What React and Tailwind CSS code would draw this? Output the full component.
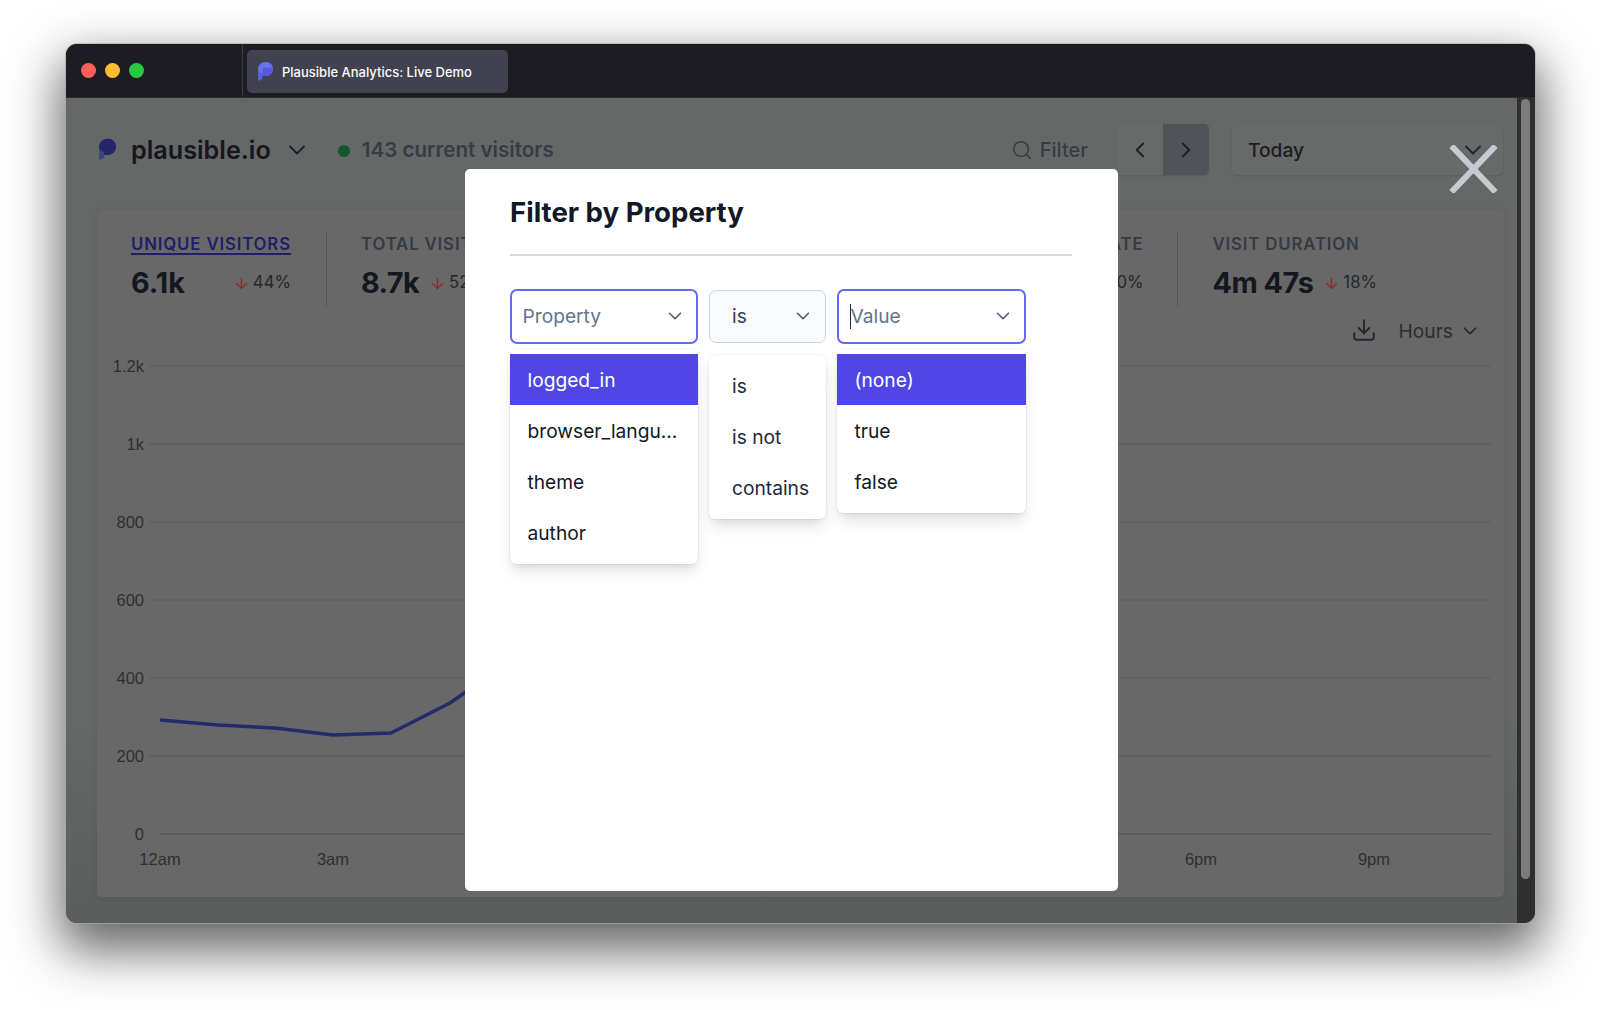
import React from "react";
import { ChevronDown, ChevronLeft, ChevronRight, Search, Download, ArrowDown } from "lucide-react";

function Logo({ className, a, b, c }) {
  return (
    <svg viewBox="0 0 18 23" className={className}>
      <path d="M0 9.5C0 4 4 0 9.5 0C14.5 0 18 3.7 18 8.5C18 13.5 14 17 9.5 17H5.5V20.5L0 23Z" fill={a} />
      <path d="M0 9.5C0 4 4 0 9.5 0C14.5 0 18 3.7 18 8.5C18 13.5 14 17 9.5 17H5.5V14C3 14 0.6 12 0 9.5Z" fill={b} />
      <path d="M7.5 7H18C17.6 12.5 14 17 9.5 17H5.5V9C5.5 8 6.3 7 7.5 7Z" fill={c} />
    </svg>
  );
}

function Stat({ label, value, delta, active, valueClass }) {
  return (
    <div className="flex flex-col pt-px">
      <div
        className={
          active
            ? "h-[22px] text-[16.8px] leading-[22px] font-semibold tracking-[0.85px] text-[#1f1d6e] underline underline-offset-[3px] decoration-2 whitespace-nowrap"
            : "h-[22px] text-[16.8px] leading-[22px] font-semibold tracking-[0.85px] text-[#353a44] whitespace-nowrap"
        }
      >
        {label}
      </div>
      <div className={"mt-[10px] flex items-center " + valueClass}>
        <span className="text-[28.8px] leading-[36px] font-bold text-[#14171f] whitespace-nowrap">{value}</span>
        <span className="flex items-center text-[16.8px] text-[#24272d] whitespace-nowrap">
          <ArrowDown className="w-[17px] h-[17px] text-[#8c2b2b]" strokeWidth={2} />
          <span className="ml-[3px]">{delta}</span>
        </span>
      </div>
    </div>
  );
}

function Menu({ items, selected, className }) {
  return (
    <div className={"bg-white rounded-[6px] pt-[5px] pb-[6px] shadow-[0_0_0_1px_rgba(15,23,42,0.04),0_10px_15px_-3px_rgba(0,0,0,0.12),0_4px_6px_-2px_rgba(0,0,0,0.06)] " + className}>
      {items.map((t, i) => (
        <div
          key={t}
          className={
            (selected && i === 0 ? "bg-[#4f46e5] text-white " : "text-[#111827] ") +
            "h-[51px] flex items-center pl-[17.5px] pt-[3px] text-[19.2px] whitespace-nowrap"
          }
        >
          {t}
        </div>
      ))}
    </div>
  );
}

export default function App() {
  const ys = [366, 444, 522, 600, 678, 756, 834];
  const labels = ["1.2k", "1k", "800", "600", "400", "200", "0"];
  return (
    <div className="w-[1600px] h-[1010px] bg-white pt-[44px] pl-[66px] overflow-hidden font-['Inter',sans-serif]">
      <div className="relative w-[1469px] h-[879px] rounded-[11px] overflow-hidden bg-[#5e5f5f] shadow-[0_0_0_1px_rgba(170,170,170,0.6),0_22px_50px_6px_rgba(0,0,0,0.6)]">
        {/* title bar */}
        <div className="h-[54px] bg-[#1c1c22] flex items-stretch border-b border-[#2c2c30]">
          <div className="w-[177px] border-r border-[#3b3b40] pl-[15px] flex items-center gap-[9.5px] h-[53px]">
            <span className="w-[14.5px] h-[14.5px] rounded-full bg-[#ff5f57]" />
            <span className="w-[14.5px] h-[14.5px] rounded-full bg-[#febc2e]" />
            <span className="w-[14.5px] h-[14.5px] rounded-full bg-[#28c840]" />
          </div>
          <div className="ml-[4px] mt-[6px] w-[261px] h-[43px] rounded-[5px] bg-[#42414f] flex items-center pl-[11px]">
            <Logo className="w-[15px] h-[19px]" a="#5a60dc" b="#6a70ea" c="#5558d8" />
            <span className="ml-[9px] mt-[2px] text-[13px] font-medium text-[#fbfbfe] whitespace-nowrap">Plausible Analytics: Live Demo</span>
          </div>
        </div>

        {/* page */}
        <div className="relative h-[825px] flex">
          <div className="w-[1451px] h-[825px] bg-gradient-to-b from-[#666767] via-[#666767] via-[75%] to-[#5c5d5d] pt-[26px] pl-[31px]">
            {/* header */}
            <div className="w-[1406px] h-[51px] flex items-center">
              <Logo className="ml-[2px] w-[17px] h-[23px]" a="#3c4578" b="#22266c" c="#22266c" />
              <span className="ml-[15px] mt-[2px] text-[25.2px] font-semibold text-[#15171d] whitespace-nowrap">plausible.io</span>
              <ChevronDown className="ml-[12px] w-[28px] h-[28px] text-[#1d2026]" strokeWidth={1.7} />
              <span className="ml-[27px] w-[12px] h-[12px] rounded-full bg-[#10592a] mt-[2px]" />
              <span className="ml-[12px] mt-[2px] text-[20.6px] font-semibold text-[#363b44] whitespace-nowrap">143 current visitors</span>
              <div className="ml-auto flex items-center">
                <Search className="w-[22px] h-[22px] text-[#363b44]" strokeWidth={1.7} />
                <span className="ml-[7px] text-[20px] font-medium text-[#363b44]">Filter</span>
                <div className="ml-[29px] flex h-[51px] rounded-[5px] overflow-hidden shadow-[0_1px_2px_rgba(0,0,0,0.12)]">
                  <div className="w-[46px] flex items-center justify-center bg-[#686969]">
                    <ChevronLeft className="w-[26px] h-[26px] text-[#1d2026]" strokeWidth={1.8} />
                  </div>
                  <div className="w-[46px] flex items-center justify-center bg-[#50535a]">
                    <ChevronRight className="w-[26px] h-[26px] text-[#1d2026]" strokeWidth={1.8} />
                  </div>
                </div>
                <div className="ml-[23px] w-[271px] h-[51px] rounded-[5px] bg-[#686969] shadow-[0_1px_2px_rgba(0,0,0,0.12)] flex items-center pl-[16px] pr-[16px]">
                  <span className="mt-px text-[19.2px] font-medium text-[#1a1c22]">Today</span>
                  <ChevronDown className="ml-auto w-[28px] h-[28px] text-[#22252c]" strokeWidth={1.7} />
                </div>
              </div>
            </div>

            {/* card */}
            <div className="mt-[35px] w-[1407px] h-[687px] rounded-[5px] bg-[#686868] shadow-[0_1px_8px_rgba(0,0,0,0.07)] pt-[22px] overflow-hidden">
              <div className="flex justify-between h-[75px] pl-[34px] pr-[127px]">
                <div className="flex">
                  <Stat label="UNIQUE VISITORS" value="6.1k" delta="44%" active valueClass="w-[160px] justify-between" />
                  <div className="ml-[35px] mr-[34px] w-px h-[75px] bg-[#50535b]" />
                  <Stat label="TOTAL VISITS" value="8.7k" delta="52%" valueClass="gap-[10px] [&>span:first-child]:tracking-[-0.6px]" />
                </div>
                <div className="flex">
                  <Stat label="BOUNCE RATE" value="48%" delta="10%" valueClass="justify-between" />
                  <div className="ml-[33px] mr-[35px] w-px h-[75px] bg-[#50535b]" />
                  <Stat label="VISIT DURATION" value="4m 47s" delta="18%" valueClass="gap-[10px] [&>span:first-child]:tracking-[-0.5px]" />
                </div>
              </div>
              <div className="mt-[12px] h-[24px] flex items-center justify-end pr-[23px]">
                <Download className="w-[26px] h-[26px] text-[#22252c] -mt-[2px]" strokeWidth={1.7} />
                <span className="ml-[22px] text-[19.2px] text-[#2a2d33]">Hours</span>
                <ChevronDown className="ml-[6px] w-[22px] h-[22px] text-[#22252c]" strokeWidth={1.8} />
              </div>
              <svg viewBox="97 345 1407 535" width="1407" height="535" className="mt-[2px] block">
                {ys.map((y, i) => (
                  <line key={y} x1={i === 6 ? 159 : 149} x2="1491" y1={y} y2={y} stroke={i === 6 ? "#515151" : "#5b5b5b"} strokeWidth="1" />
                ))}
                {labels.map((l, i) => (
                  <text key={l} x="144" y={ys[i] + 6} textAnchor="end" fontSize="16.5" fontFamily="'Liberation Sans',sans-serif" fill="#2f2f2f">{l}</text>
                ))}
                {[["12am", 160], ["3am", 333], ["6pm", 1201], ["9pm", 1374]].map(([t, x]) => (
                  <text key={t} x={x} y="865" textAnchor="middle" fontSize="16.5" fontFamily="'Liberation Sans',sans-serif" fill="#2f2f2f">{t}</text>
                ))}
                <polyline points="160,720 218,725 275,728 333,735 391,733 450,703 470,689" fill="none" stroke="#252a6b" strokeWidth="3.5" strokeLinejoin="round" />
              </svg>
            </div>
          </div>
          {/* scrollbar */}
          <div className="w-[18px] h-[825px] bg-[#2f2f2f] pl-[4px] pt-[1px]">
            <div className="w-[9px] h-[780px] rounded-full bg-[#7b7b7b]" />
          </div>

          {/* modal */}
          <div className="absolute left-[399px] top-[71px] w-[653px] h-[722px] bg-white rounded-[5px] pt-[25px] pl-[45px] pr-[46px]">
            <div className="text-[27.6px] leading-[36px] font-bold text-[#111827] whitespace-nowrap">Filter by Property</div>
            <div className="mt-[24px] h-[1.5px] bg-[#d3d7e2]" />
            <div className="mt-[33px] flex items-start gap-[11px]">
              <div className="w-[188px] flex flex-col">
                <div className="h-[55px] rounded-[7px] border-[2.5px] border-[#6467f2] flex items-center pl-[10.5px] pr-[10px]">
                  <span className="text-[19.2px] text-[#64748b]">Property</span>
                  <ChevronDown className="ml-auto w-[22px] h-[22px] text-[#475569]" strokeWidth={1.6} />
                </div>
                <Menu className="mt-[5px]" items={["logged_in", "browser_langu...", "theme", "author"]} selected />
              </div>
              <div className="w-[117px] flex flex-col mt-px">
                <div className="h-[53px] rounded-[7px] border-[1.5px] border-[#cbd5e1] bg-[#f8fafc] flex items-center pl-[22px] pr-[11px]">
                  <span className="text-[19.2px] text-[#334155]">is</span>
                  <ChevronDown className="ml-auto w-[22px] h-[22px] text-[#475569]" strokeWidth={1.6} />
                </div>
                <Menu className="mt-[12px] [&>div]:pl-[23px] [&>div]:pt-[2px] [&>div]:text-[#1e293b]" items={["is", "is not", "contains"]} />
              </div>
              <div className="w-[188.5px] flex flex-col">
                <div className="h-[55px] rounded-[7px] border-[2.5px] border-[#6467f2] flex items-center pl-[10.5px] pr-[10px]">
                  <span className="w-px h-[25px] bg-[#1e293b]" />
                  <span className="text-[19.2px] text-[#64748b]">Value</span>
                  <ChevronDown className="ml-auto w-[22px] h-[22px] text-[#475569]" strokeWidth={1.6} />
                </div>
                <Menu className="mt-[5px]" items={["(none)", "true", "false"]} selected />
              </div>
            </div>
          </div>

          {/* close */}
          <svg viewBox="0 0 48 48" className="absolute left-[1383px] top-[47px] w-[49px] h-[48px]">
            <path d="M2 1L46 47M46 1L2 47" stroke="#c6cad1" strokeWidth="6" fill="none" />
          </svg>
        </div>
      </div>
    </div>
  );
}
